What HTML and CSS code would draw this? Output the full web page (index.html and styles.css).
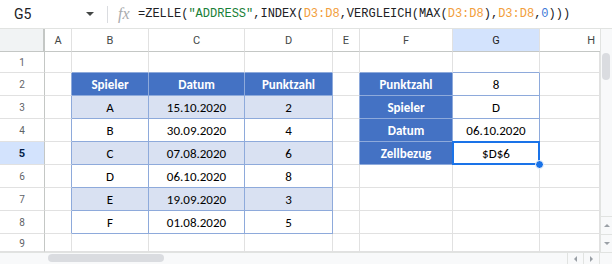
FILE: index.html
```html
<!DOCTYPE html>
<html lang="de">
<head>
    <meta charset="UTF-8">
    <title>ZELLE ADDRESS INDEX VERGLEICH</title>
    <link rel="stylesheet" href="styles.css">
</head>
<body>
    <div class="app">
        <!-- Formula bar -->
        <div class="formula-bar">
            <div class="name-box">G5</div>
            <span class="caret"></span>
            <span class="divider"></span>
            <span class="fx">fx</span>
            <div class="formula">=ZELLE(<span class="str">"ADDRESS"</span>,INDEX(<span class="ref">D3:D8</span>,VERGLEICH(MAX(<span class="ref">D3:D8</span>),<span class="ref">D3:D8</span>,<span class="num">0</span>)))</div>
        </div>

        <div class="main">
            <!-- Sheet grid -->
            <div class="grid">
                <div class="cell corner"></div>
                <div class="cell col-hdr">A</div>
                <div class="cell col-hdr">B</div>
                <div class="cell col-hdr">C</div>
                <div class="cell col-hdr">D</div>
                <div class="cell col-hdr">E</div>
                <div class="cell col-hdr">F</div>
                <div class="cell col-hdr active">G</div>
                <div class="cell col-hdr h-end">H</div>

                <div class="cell rh">1</div>
                <div class="cell"></div>
                <div class="cell bb"></div>
                <div class="cell bb"></div>
                <div class="cell bb"></div>
                <div class="cell"></div>
                <div class="cell bb"></div>
                <div class="cell bb"></div>
                <div class="cell"></div>

                <div class="cell rh">2</div>
                <div class="cell br"></div>
                <div class="cell t th">Spieler</div>
                <div class="cell t th">Datum</div>
                <div class="cell t th">Punktzahl</div>
                <div class="cell br"></div>
                <div class="cell t th">Punktzahl</div>
                <div class="cell t">8</div>
                <div class="cell"></div>

                <div class="cell rh">3</div>
                <div class="cell br"></div>
                <div class="cell t alt">A</div>
                <div class="cell t alt">15.10.2020</div>
                <div class="cell t alt">2</div>
                <div class="cell br"></div>
                <div class="cell t th">Spieler</div>
                <div class="cell t">D</div>
                <div class="cell"></div>

                <div class="cell rh">4</div>
                <div class="cell br"></div>
                <div class="cell t">B</div>
                <div class="cell t">30.09.2020</div>
                <div class="cell t">4</div>
                <div class="cell br"></div>
                <div class="cell t th">Datum</div>
                <div class="cell t">06.10.2020</div>
                <div class="cell"></div>

                <div class="cell rh active">5</div>
                <div class="cell br"></div>
                <div class="cell t alt">C</div>
                <div class="cell t alt">07.08.2020</div>
                <div class="cell t alt">6</div>
                <div class="cell br"></div>
                <div class="cell t th">Zellbezug</div>
                <div class="cell t sel">$D$6</div>
                <div class="cell"></div>

                <div class="cell rh">6</div>
                <div class="cell br"></div>
                <div class="cell t">D</div>
                <div class="cell t">06.10.2020</div>
                <div class="cell t">8</div>
                <div class="cell"></div>
                <div class="cell"></div>
                <div class="cell"></div>
                <div class="cell"></div>

                <div class="cell rh">7</div>
                <div class="cell br"></div>
                <div class="cell t alt">E</div>
                <div class="cell t alt">19.09.2020</div>
                <div class="cell t alt">3</div>
                <div class="cell"></div>
                <div class="cell"></div>
                <div class="cell"></div>
                <div class="cell"></div>

                <div class="cell rh">8</div>
                <div class="cell br"></div>
                <div class="cell t">F</div>
                <div class="cell t">01.08.2020</div>
                <div class="cell t">5</div>
                <div class="cell"></div>
                <div class="cell"></div>
                <div class="cell"></div>
                <div class="cell"></div>

                <div class="cell rh last">9</div>
                <div class="cell"></div>
                <div class="cell"></div>
                <div class="cell"></div>
                <div class="cell"></div>
                <div class="cell"></div>
                <div class="cell"></div>
                <div class="cell"></div>
                <div class="cell"></div>
            </div>

            <!-- Vertical scrollbar -->
            <div class="vscroll">
                <div class="v-thumb"></div>
                <div class="spacer"></div>
                <div class="v-btn"><span class="tri up"></span></div>
                <div class="v-btn"><span class="tri down"></span></div>
            </div>
        </div>

        <!-- Horizontal scrollbar -->
        <div class="hscroll">
            <div class="h-thumb"></div>
            <div class="spacer"></div>
            <div class="h-btn"><span class="tri left"></span></div>
            <div class="h-btn"><span class="tri right"></span></div>
            <div class="h-corner"></div>
        </div>
    </div>
</body>
</html>
```

FILE: styles.css
```css
/* Global */
body {
    margin: 0;
    font-family: Roboto, "Liberation Sans", sans-serif;
    background-color: #ffffff;
}
.app {
    width: 612px;
    height: 264px;
    overflow: hidden;
    display: flex;
    flex-direction: column;
}

/* Formula bar */
.formula-bar {
    height: 29px;
    box-sizing: border-box;
    border-bottom: 1px solid #e1e3e1;
    display: flex;
    align-items: center;
    flex-shrink: 0;
}
.name-box {
    width: 86px;
    box-sizing: border-box;
    padding-left: 14px;
    font-size: 14px;
    color: #202124;
}
.caret {
    width: 0;
    height: 0;
    border-left: 4px solid transparent;
    border-right: 4px solid transparent;
    border-top: 4px solid #444746;
}
.divider {
    width: 1px;
    height: 17px;
    margin-left: 13px;
    background-color: #dadce0;
}
.fx {
    margin-left: 10px;
    width: 16px;
    font-family: "Liberation Serif", serif;
    font-style: italic;
    font-size: 16px;
    color: #a8abae;
}
.formula {
    margin-left: 4px;
    font-family: "Liberation Mono", monospace;
    font-size: 12px;
    color: #202124;
    white-space: nowrap;
}
.formula .str {
    color: #188038;
}
.formula .ref {
    color: #f29e3c;
}
.formula .num {
    color: #3c78d8;
}

/* Sheet */
.main {
    display: flex;
    height: 223px;
}
.grid {
    width: 600px;
    display: grid;
    grid-template-columns: 45px 27px 77px 96px 88px 27px 93px 87px 60px;
    grid-template-rows: 23px 21px repeat(7, 23px) 18px;
    overflow: hidden;
}
.cell {
    box-sizing: border-box;
    border-right: 1px solid #e1e1e1;
    border-bottom: 1px solid #e1e1e1;
    display: flex;
    align-items: center;
    justify-content: center;
    font-family: Carlito, "Liberation Sans", sans-serif;
    font-size: 13px;
    color: #000000;
    white-space: nowrap;
}
.corner {
    background-color: #f1f3f4;
    border-right: 2px solid #c4c7c5;
    border-bottom-color: #c4c7c5;
}
.col-hdr {
    font-family: Roboto, sans-serif;
    font-size: 11px;
    color: #444746;
    border-bottom-color: #c4c7c5;
}
.col-hdr.active {
    background-color: #d3e3fd;
    color: #1f1f1f;
}
.h-end {
    justify-content: flex-end;
    padding-right: 5px;
    border-right: none;
}
.rh {
    font-family: Roboto, sans-serif;
    font-size: 10px;
    color: #5f6368;
    border-right-color: #c4c7c5;
    border-bottom-color: #e1e1e1;
}
.rh.active {
    background-color: #d3e3fd;
    color: #041e49;
    font-weight: bold;
    font-size: 11px;
}
.rh.last {
    align-items: flex-start;
    padding-top: 4px;
}

/* Formatted tables */
.t {
    border-right-color: #8eaadb;
    border-bottom-color: #8eaadb;
}
.th {
    background-color: #4472c4;
    color: #ffffff;
    font-weight: bold;
}
.alt {
    background-color: #d9e1f2;
}
.br {
    border-right-color: #8eaadb;
}
.bb {
    border-bottom-color: #8eaadb;
}

/* Selected cell */
.sel {
    position: relative;
}
.sel::after {
    content: "";
    position: absolute;
    top: -1px;
    left: -1px;
    right: -1px;
    bottom: -1px;
    border: 2px solid #1a73e8;
}
.sel::before {
    content: "";
    position: absolute;
    right: -5px;
    bottom: -5px;
    width: 7px;
    height: 7px;
    border-radius: 50%;
    background-color: #1a73e8;
    border: 1px solid #ffffff;
    z-index: 1;
}

/* Scrollbars */
.spacer {
    flex: 1;
}
.vscroll {
    width: 12px;
    box-sizing: border-box;
    background-color: #f8f9fa;
    border-left: 1px solid #e1e3e1;
    display: flex;
    flex-direction: column;
}
.v-thumb {
    margin-top: 24px;
    margin-left: 1px;
    width: 8px;
    height: 27px;
    border-radius: 4px;
    background-color: #dadce0;
}
.v-btn {
    height: 17px;
    border-top: 1px solid #e1e3e1;
    display: flex;
    align-items: center;
    justify-content: center;
}
.hscroll {
    height: 12px;
    box-sizing: border-box;
    background-color: #f8f9fa;
    border-top: 1px solid #e1e3e1;
    display: flex;
    flex-shrink: 0;
}
.h-thumb {
    margin-left: 48px;
    margin-top: 1px;
    width: 116px;
    height: 8px;
    border-radius: 4px;
    background-color: #dadce0;
}
.h-btn {
    width: 15px;
    border-left: 1px solid #e1e3e1;
    display: flex;
    align-items: center;
    justify-content: center;
}
.h-corner {
    width: 12px;
    border-left: 1px solid #e1e3e1;
}
.tri {
    width: 0;
    height: 0;
}
.tri.up {
    border-left: 3px solid transparent;
    border-right: 3px solid transparent;
    border-bottom: 3px solid #9aa0a6;
}
.tri.down {
    border-left: 3px solid transparent;
    border-right: 3px solid transparent;
    border-top: 3px solid #9aa0a6;
}
.tri.left {
    border-top: 3px solid transparent;
    border-bottom: 3px solid transparent;
    border-right: 3px solid #9aa0a6;
}
.tri.right {
    border-top: 3px solid transparent;
    border-bottom: 3px solid transparent;
    border-left: 3px solid #9aa0a6;
}
```
